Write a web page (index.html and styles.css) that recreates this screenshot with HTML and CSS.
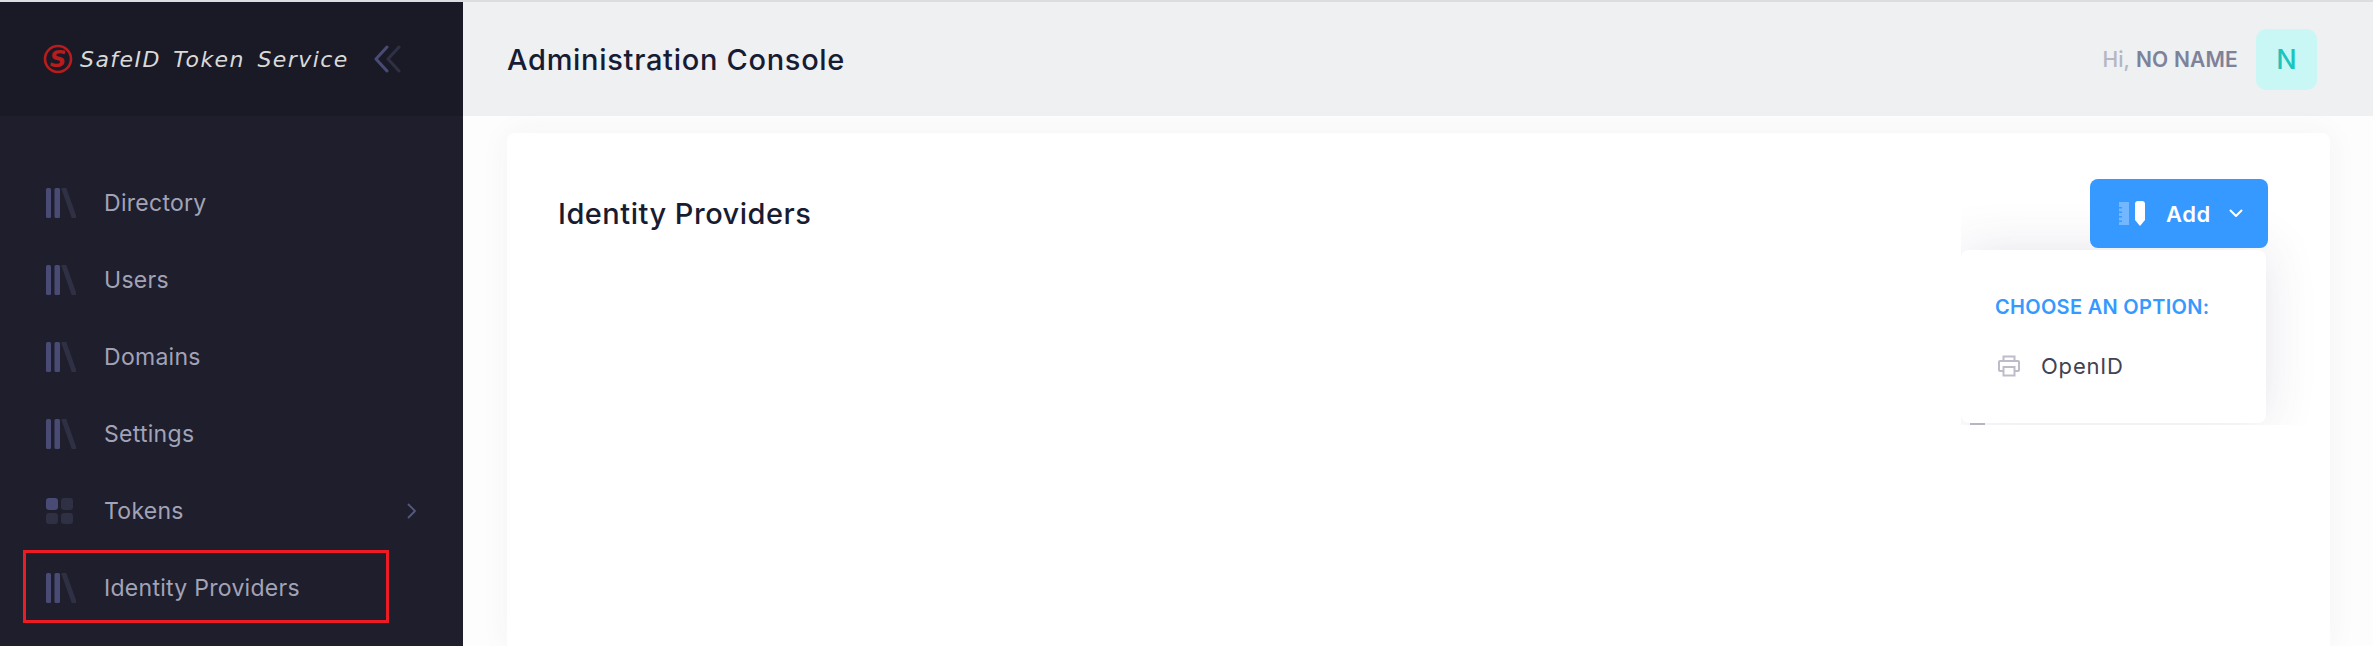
FILE: index.html
```html
<!DOCTYPE html>
<html lang="en">
<head>
  <meta charset="UTF-8" />
  <title>SafeID Token Service</title>
  <link rel="stylesheet" href="styles.css">
</head>
<body>
  <div class="page">
    <aside class="sidebar">
      <div class="brand">
        <svg class="brand-logo" viewBox="0 0 30 30">
          <circle cx="15" cy="15" r="13" fill="none" stroke="#b81c1c" stroke-width="2.6"/>
          <text x="15" y="23" text-anchor="middle" class="brand-s">S</text>
        </svg>
        <span class="brand-name">SafeID Token Service</span>
        <svg class="brand-toggle" viewBox="0 0 28 28">
          <path d="M14 2 3 14l11 12" fill="none" stroke="#494b74" stroke-width="3" stroke-linecap="round" stroke-linejoin="round"/>
          <path d="M26 2 15 14l11 12" fill="none" stroke="#2f3044" stroke-width="3" stroke-linecap="round" stroke-linejoin="round"/>
        </svg>
      </div>
      <nav class="nav">
        <a class="nav-item">
          <svg class="nav-icon" viewBox="0 0 30 30"><rect x="0" width="5" height="30" rx="1.5" fill="#494b74"/><rect x="8.500" width="5.500" height="30" rx="1.500" fill="#494b74"/><path d="M18 1 28 29" stroke="#2f3044" stroke-width="5" stroke-linecap="round"/></svg>
          Directory
        </a>
        <a class="nav-item">
          <svg class="nav-icon" viewBox="0 0 30 30"><rect x="0" width="5" height="30" rx="1.5" fill="#494b74"/><rect x="8.500" width="5.500" height="30" rx="1.500" fill="#494b74"/><path d="M18 1 28 29" stroke="#2f3044" stroke-width="5" stroke-linecap="round"/></svg>
          Users
        </a>
        <a class="nav-item">
          <svg class="nav-icon" viewBox="0 0 30 30"><rect x="0" width="5" height="30" rx="1.5" fill="#494b74"/><rect x="8.500" width="5.500" height="30" rx="1.500" fill="#494b74"/><path d="M18 1 28 29" stroke="#2f3044" stroke-width="5" stroke-linecap="round"/></svg>
          Domains
        </a>
        <a class="nav-item">
          <svg class="nav-icon" viewBox="0 0 30 30"><rect x="0" width="5" height="30" rx="1.5" fill="#494b74"/><rect x="8.500" width="5.500" height="30" rx="1.500" fill="#494b74"/><path d="M18 1 28 29" stroke="#2f3044" stroke-width="5" stroke-linecap="round"/></svg>
          Settings
        </a>
        <a class="nav-item">
          <svg class="nav-icon" viewBox="0 0 30 30"><rect x="0" y="2" width="12" height="12" rx="3" fill="#494b74"/><rect x="15" y="2" width="12" height="12" rx="3" fill="#2f3044"/><rect x="0" y="17" width="12" height="11" rx="3" fill="#2f3044"/><rect x="15" y="17" width="12" height="11" rx="3" fill="#2f3044"/></svg>
          Tokens
          <svg class="nav-arrow" viewBox="0 0 10 16"><path d="M1.500 1.500 8 8l-6.500 6.500" fill="none" stroke="#55587a" stroke-width="1.800" stroke-linecap="round" stroke-linejoin="round"/></svg>
        </a>
        <a class="nav-item">
          <svg class="nav-icon" viewBox="0 0 30 30"><rect x="0" width="5" height="30" rx="1.5" fill="#494b74"/><rect x="8.500" width="5.500" height="30" rx="1.500" fill="#494b74"/><path d="M18 1 28 29" stroke="#2f3044" stroke-width="5" stroke-linecap="round"/></svg>
          Identity Providers
          <span class="nav-mark"></span>
        </a>
      </nav>
    </aside>
    <main class="main">
      <header class="topbar">
        <h1 class="topbar-title">Administration Console</h1>
        <div class="user">
          <span class="user-hi">Hi,</span>
          <span class="user-name">NO NAME</span>
          <span class="avatar">N</span>
        </div>
      </header>
      <section class="card">
        <h2 class="card-title">Identity Providers</h2>
        <button class="add-button">
          <svg class="add-icon" viewBox="0 0 27 25">
            <path d="M1 1h10v23H1v-3h3v-1.500H1v-3h3V15H1v-3h3v-1.500H1v-3h3V6H1z" fill="#fff" opacity=".3"/>
            <path d="M17 3a3 3 0 0 1 3-3h4a3 3 0 0 1 3 3v16l-5 6-5-6z" fill="#fff"/>
          </svg>
          Add
          <svg class="add-arrow" viewBox="0 0 14 9"><path d="M1.500 1.500 7 7l5.500-5.500" fill="none" stroke="#fff" stroke-width="2" stroke-linecap="round" stroke-linejoin="round"/></svg>
        </button>
      </section>
      <div class="menu-clip">
        <div class="menu">
          <div class="menu-head">CHOOSE AN OPTION:</div>
          <a class="menu-item">
            <svg class="menu-icon" viewBox="0 0 22 22">
              <path d="M5.500 6V1.500h11V6M5.500 16H2a1 1 0 0 1-1-1V7a1 1 0 0 1 1-1h18a1 1 0 0 1 1 1v8a1 1 0 0 1-1 1h-3.500" fill="none" stroke="#bdbdc9" stroke-width="2"/>
              <rect x="5.500" y="12" width="11" height="8.500" fill="none" stroke="#bdbdc9" stroke-width="2"/>
            </svg>
            OpenID
          </a>
        </div>
        <span class="menu-tail"></span>
      </div>
    </main>
  </div>
</body>
</html>
```

FILE: styles.css
```css
html, body {
  margin: 0;
  height: 100%;
  overflow: hidden;
}
body {
  background-color: #dcdde0;
  padding-top: 2px;
  box-sizing: border-box;
  font-family: 'Inter', 'Open Sans', sans-serif;
}
.page {
  display: flex;
  height: 100%;
}
.sidebar {
  width: 463px;
  flex-shrink: 0;
  background-color: #1e1e2d;
}
.brand {
  height: 114px;
  background-color: #1a1a27;
  display: flex;
  align-items: center;
  padding-left: 43px;
}
.brand-logo {
  width: 30px;
  height: 30px;
  margin-right: 7px;
}
.brand-s {
  font-family: 'DejaVu Sans', sans-serif;
  font-size: 23px;
  font-weight: bold;
  font-style: italic;
  fill: #b81c1c;
}
.brand-name {
  font-family: 'DejaVu Sans', sans-serif;
  font-style: italic;
  font-size: 22px;
  letter-spacing: 1.45px;
  word-spacing: 4px;
  color: #d9d9d9;
  white-space: nowrap;
}
.brand-toggle {
  width: 28px;
  height: 28px;
  margin-left: 24px;
}
.nav {
  padding-top: 48px;
}
.nav-item {
  position: relative;
  height: 77px;
  display: flex;
  align-items: center;
  padding-left: 46px;
  padding-right: 46px;
  color: #a2a3b7;
  font-size: 23px;
  letter-spacing: 0.28px;
}
.nav-icon {
  width: 30px;
  height: 30px;
  margin-right: 28px;
}
.nav-arrow {
  width: 10px;
  height: 16px;
  margin-left: auto;
}
.nav-mark {
  position: absolute;
  left: 23px;
  top: 1px;
  width: 360px;
  height: 67px;
  border: 3px solid #ed1c24;
}
.main {
  position: relative;
  flex: 1;
  background-color: #fdfdfd;
}
.topbar {
  height: 114px;
  background-color: #eef0f2;
  display: flex;
  align-items: center;
  justify-content: space-between;
  padding-left: 44px;
  padding-right: 56px;
}
.topbar-title {
  margin: 0;
  font-size: 29px;
  font-weight: 500;
  letter-spacing: 0.7px;
  color: #181c32;
}
.user {
  display: flex;
  align-items: center;
  font-size: 21px;
  font-weight: 500;
}
.user-hi {
  color: #b5b5c3;
  margin-right: 6px;
}
.user-name {
  color: #7e8299;
  font-weight: 600;
  letter-spacing: 0.2px;
  margin-right: 18px;
}
.avatar {
  width: 61px;
  height: 61px;
  border-radius: 10px;
  background-color: #c9f7f5;
  color: #1bc5bd;
  font-size: 27px;
  display: flex;
  align-items: center;
  justify-content: center;
}
.card {
  margin: 17px 43px 0 44px;
  padding: 46px 62px 0 51px;
  height: 513px;
  box-sizing: border-box;
  background-color: #fff;
  border-radius: 8px 8px 0 0;
  box-shadow: 0 0 30px rgba(82, 63, 105, 0.05);
  display: flex;
  justify-content: space-between;
  align-items: flex-start;
}
.card-title {
  margin: 0;
  line-height: 69px;
  font-size: 29px;
  font-weight: 500;
  letter-spacing: 0.5px;
  color: #181c32;
}
.add-button {
  position: relative;
  z-index: 2;
  width: 178px;
  height: 69px;
  border: none;
  border-radius: 8px;
  background-color: #3699ff;
  color: #fff;
  font-family: inherit;
  font-size: 22px;
  font-weight: 600;
  letter-spacing: 0.5px;
  display: flex;
  align-items: center;
  padding: 0 0 0 28px;
}
.add-icon {
  width: 27px;
  height: 25px;
  margin-right: 21px;
}
.add-arrow {
  width: 14px;
  height: 9px;
  margin-left: 18px;
}
.menu-clip {
  position: absolute;
  left: 1498px;
  right: 0;
  top: 30px;
  height: 393px;
  overflow: hidden;
  z-index: 1;
}
.menu {
  position: absolute;
  left: 0;
  top: 218px;
  width: 305px;
  height: 173px;
  box-sizing: border-box;
  padding: 39px 0 0 34px;
  background-color: #fff;
  border-radius: 8px;
  box-shadow: 0 0 50px rgba(82, 63, 105, 0.15);
}
.menu-head {
  color: #3699ff;
  font-size: 20px;
  font-weight: 600;
  letter-spacing: 0.3px;
  line-height: 36px;
  white-space: nowrap;
}
.menu-item {
  display: flex;
  align-items: center;
  margin-top: 28px;
  padding-left: 3px;
  color: #3f4254;
  font-size: 22px;
  font-weight: 400;
  letter-spacing: 0.8px;
}
.menu-icon {
  width: 22px;
  height: 22px;
  margin-right: 21px;
}
.menu-tail {
  position: absolute;
  left: 9px;
  top: 391px;
  width: 15px;
  height: 2px;
  background-color: #b5b5c3;
}
```
